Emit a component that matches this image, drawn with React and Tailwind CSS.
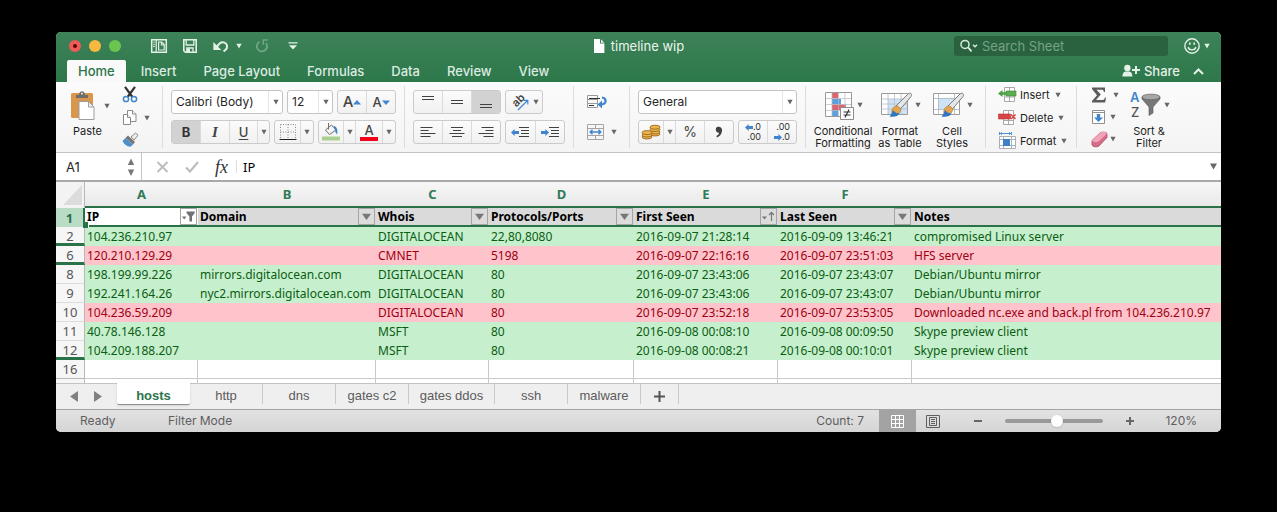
import React from "react";

const COLUMNS = [
  { letter: "A", title: "IP", filter: "filtered" },
  { letter: "B", title: "Domain", filter: "plain" },
  { letter: "C", title: "Whois", filter: "plain" },
  { letter: "D", title: "Protocols/Ports", filter: "plain" },
  { letter: "E", title: "First Seen", filter: "sorted" },
  { letter: "F", title: "Last Seen", filter: "plain" },
  { letter: "", title: "Notes", filter: null },
];

const ROWS = [
  { n: 2, tone: "good", gap: true, cells: ["104.236.210.97", "", "DIGITALOCEAN", "22,80,8080", "2016-09-07 21:28:14", "2016-09-09 13:46:21", "compromised Linux server"] },
  { n: 6, tone: "bad", gap: true, cells: ["120.210.129.29", "", "CMNET", "5198", "2016-09-07 22:16:16", "2016-09-07 23:51:03", "HFS server"] },
  { n: 8, tone: "good", cells: ["198.199.99.226", "mirrors.digitalocean.com", "DIGITALOCEAN", "80", "2016-09-07 23:43:06", "2016-09-07 23:43:07", "Debian/Ubuntu mirror"] },
  { n: 9, tone: "good", cells: ["192.241.164.26", "nyc2.mirrors.digitalocean.com", "DIGITALOCEAN", "80", "2016-09-07 23:43:06", "2016-09-07 23:43:07", "Debian/Ubuntu mirror"] },
  { n: 10, tone: "bad", cells: ["104.236.59.209", "", "DIGITALOCEAN", "80", "2016-09-07 23:52:18", "2016-09-07 23:53:05", "Downloaded nc.exe and back.pl from 104.236.210.97"] },
  { n: 11, tone: "good", cells: ["40.78.146.128", "", "MSFT", "80", "2016-09-08 00:08:10", "2016-09-08 00:09:50", "Skype preview client"] },
  { n: 12, tone: "good", gap: true, cells: ["104.209.188.207", "", "MSFT", "80", "2016-09-08 00:08:21", "2016-09-08 00:10:01", "Skype preview client"] },
];

const Caret = ({ className = "text-[#666]" }) => (
  <svg className={`shrink-0 ${className}`} width="6" height="6" viewBox="0 0 6 6" fill="currentColor" aria-hidden="true">
    <path d="M0.4 0.8h5.2L3 5.4z" />
  </svg>
);

function TitleBar() {
  return (
    <div className="grid h-7 grid-cols-[1fr_auto_1fr] items-center">
      <div className="flex items-center pl-[13px]">
        <div className="flex gap-2">
          <button aria-label="Close" className="flex size-3 items-center justify-center rounded-full bg-[#ee5b58]">
            <span className="size-1 rounded-full bg-[#5a0505]" />
          </button>
          <button aria-label="Minimize" className="size-3 rounded-full bg-[#f6b840]" />
          <button aria-label="Zoom window" className="size-3 rounded-full bg-[#6cc551]" />
        </div>
        <div className="ml-[29px] flex items-center text-[#e3f1e7]">
          <button aria-label="Templates">
            <svg width="18" height="16" viewBox="0 0 18 16" fill="none" stroke="currentColor" strokeWidth="1.5">
              <path d="M1.7 1.7h14.6v12.6H1.7z" />
              <path d="M6.2 2v12" strokeWidth="1.2" />
              <path d="M3.2 4h1.6M3.2 6.2h1.6M3.2 8.4h1.6" strokeWidth="1.1" />
              <path d="M8.6 4h3.2l2.4 2.6V12H8.6z" strokeWidth="1.2" />
              <path d="M11.4 4v3h3" strokeWidth="1.1" />
            </svg>
          </button>
          <button aria-label="Save" className="ml-[14px]">
            <svg width="16" height="16" viewBox="0 0 16 16" fill="none" stroke="currentColor" strokeWidth="1.6">
              <path d="M1.8 1.8h12.4v12.4H3.4L1.8 12.6z" />
              <path d="M4.2 2v5h7.6V2M4.8 14V10h6.2v4" strokeWidth="1.3" />
              <path d="M5 10.6h3V14H5z" fill="currentColor" stroke="none" />
            </svg>
          </button>
          <button aria-label="Undo" className="ml-[14px]">
            <svg width="18" height="16" viewBox="0 0 18 16" fill="none" stroke="currentColor" strokeWidth="2">
              <path d="M4.5 9.5C7 5 10 3.5 12.6 4.6c3.2 1.4 3 5.4 1 7.2l-2 1.8" />
              <path d="M1.4 4v8h8z" fill="currentColor" stroke="none" />
            </svg>
          </button>
          <button aria-label="Undo history" className="ml-[6px]"><Caret className="text-[#e3f1e7]" /></button>
          <button aria-label="Redo" className="ml-3 text-[#72a785]">
            <svg width="16" height="16" viewBox="0 0 16 16" fill="none" stroke="currentColor" strokeWidth="1.8">
              <path d="M5.6 3.8a5.1 5.1 0 1 0 6.4 1.5" />
              <path d="M8.6 1.2h5v1.6H10v4H8.6z" fill="currentColor" stroke="none" />
            </svg>
          </button>
          <button aria-label="Customize toolbar" className="ml-[18px]">
            <svg width="10" height="8" viewBox="0 0 10 8" fill="currentColor"><path d="M0.5 0.3h9v1.3h-9zM1 3.2h8L5 7.4z" /></svg>
          </button>
        </div>
      </div>
      <h1 className="flex items-center gap-[6px] text-[13px] leading-4 text-[#eaf4ed]">
        <svg width="12" height="14" viewBox="0 0 12 14"><path d="M1 0h6v4.6h4.4V14H1z" fill="#fff" /><path d="M8 0.2 11.3 3.8H8z" fill="#e8f2eb" /></svg>
        timeline wip
      </h1>
      <div className="flex items-center justify-end pr-[11px]">
        <label className="flex h-5 w-[214px] items-center rounded-[3px] bg-[#2a6240] pl-[6px]">
          <svg width="18" height="14" viewBox="0 0 18 14" fill="none" stroke="#dcebe1" strokeWidth="1.5">
            <circle cx="5" cy="5.4" r="4" /><path d="m8 8.4 3.6 4" strokeWidth="1.8" /><path d="m13 5.8 2 2 2-2" strokeWidth="1.3" />
          </svg>
          <input aria-label="Search Sheet" placeholder="Search Sheet" className="ml-1 min-w-0 flex-1 bg-transparent text-[13px] leading-4 text-white outline-none placeholder:text-[#76a386]" />
        </label>
        <button aria-label="Feedback" className="ml-4 flex items-center gap-1 text-[#e3f1e7]">
          <svg width="16" height="16" viewBox="0 0 16 16" fill="none" stroke="currentColor" strokeWidth="1.4">
            <circle cx="8" cy="8" r="7.2" /><path d="M4.2 9.2c.6 3.6 7 3.6 7.6 0" /><path d="M5.8 4.4v2.4M10.2 4.4v2.4" strokeWidth="1.6" />
          </svg>
          <Caret className="text-[#e3f1e7]" />
        </button>
      </div>
    </div>
  );
}

const MENU = ["Insert", "Page Layout", "Formulas", "Data", "Review", "View"];

function MenuTabs() {
  return (
    <nav className="flex h-[22px] items-stretch justify-between pl-[11px] pr-[17px]">
      <div className="flex gap-[3px] text-[13px] leading-4 font-medium">
        <button className="rounded-t-[2px] bg-[#f9f9f9] px-[11px] text-[#2b7549]">Home</button>
        {MENU.map((m) => (
          <button key={m} className="px-3 text-[#dcebe1]">{m}</button>
        ))}
      </div>
      <div className="flex items-center gap-[13px] text-[#e3f1e7]">
        <button className="flex items-center gap-1 text-[13px] leading-4 font-medium">
          <svg width="18" height="14" viewBox="0 0 18 14" fill="currentColor">
            <circle cx="5.4" cy="4" r="3.2" /><path d="M0.4 12.6c0-3.6 1.6-4.8 3-5.2h4c1.4.4 3 1.600 3 5.200z" /><path d="M13 2h2v3h3v2h-3v3h-2V7h-3V5h3z" />
          </svg>
          Share
        </button>
        <button aria-label="Collapse ribbon">
          <svg width="11" height="7" viewBox="0 0 11 7" fill="none" stroke="currentColor" strokeWidth="2"><path d="M1 6l4.500-4.500L10 6" /></svg>
        </button>
      </div>
    </nav>
  );
}

const Group = ({ className = "", children }) => (
  <div className={`shrink-0 border-r border-[#dcdcdc] py-1 ${className}`}>{children}</div>
);

const Segment = ({ className = "", children }) => (
  <div className={`flex h-6 divide-x divide-[#dadada] overflow-hidden rounded-[3px] border border-[#cbcbcb] bg-gradient-to-b from-[#fbfbfb] to-[#f1f1f1] ${className}`}>{children}</div>
);

const Tool = ({ label, className = "flex-1", pressed, children }) => (
  <button aria-label={label} aria-pressed={pressed} className={`flex items-center justify-center ${pressed ? "bg-[#d2d2d2]" : ""} ${className}`}>{children}</button>
);

const DropField = ({ label, value, options, className }) => (
  <div className={`relative flex h-6 items-center rounded-[3px] border border-[#c4c4c4] bg-white ${className}`}>
    <select aria-label={label} defaultValue={value} className="h-full w-full appearance-none bg-transparent pl-1 text-[12px] leading-4 text-[#262626] outline-none">
      {options.map((o) => <option key={o}>{o}</option>)}
    </select>
    <span className="pointer-events-none absolute inset-y-0 right-0 flex w-[14px] items-center justify-center border-l border-[#e6e6e6]"><Caret /></span>
  </div>
);

const Lines = ({ d, width = 16 }) => (
  <svg width={width} height="18" viewBox={`0 0 ${width} 18`} fill="none" stroke="#404040" strokeWidth="1"><path d={d} /></svg>
);

const BlueArrow = ({ flip }) => (
  <svg width="8" height="7" viewBox="0 0 8 7"><path d={flip ? "M8 3.500 4.400 0v2H0v3h4.400v2z" : "M0 3.500 3.600 0v2H8v3H3.600v2z"} fill="#3f86cf" /></svg>
);

function ClipboardGroup() {
  return (
    <Group className="flex w-[107px] pl-[14px]">
      <div className="flex flex-col">
        <div className="flex items-center gap-2">
          <button aria-label="Paste clipboard">
            <svg width="26" height="31" viewBox="0 0 26 31">
              <rect x="1" y="3" width="22" height="25" rx="1.500" fill="#d9974d" />
              <path d="M6 8V5h3c0-5 6-5 6 0h3v3z" fill="#6d6d6d" /><circle cx="12" cy="3.600" r="1.100" fill="#ddd" />
              <path d="M9 11.500h9.500l5.500 5.500v12.500H9z" fill="#fff" stroke="#9d9d9d" />
              <path d="M18.500 11.500v5.500H24z" fill="#f0f0f0" stroke="#9d9d9d" />
            </svg>
          </button>
          <Caret />
        </div>
        <span className="mt-[3px] ml-[3px] text-[11px] leading-[14px] text-[#1c1c1c]">Paste</span>
      </div>
      <div className="-mt-1 ml-3 flex flex-col gap-[6px]">
        <button aria-label="Cut">
          <svg width="16" height="17" viewBox="0 0 16 17" fill="none">
            <path d="M3 0.800 10.400 11M13 0.800 5.600 11" stroke="#333" strokeWidth="2.200" />
            <circle cx="4" cy="13" r="2.600" stroke="#4186c8" strokeWidth="1.500" /><circle cx="12" cy="13" r="2.600" stroke="#4186c8" strokeWidth="1.500" />
          </svg>
        </button>
        <button aria-label="Copy" className="flex items-center gap-[6px]">
          <svg width="16" height="17" viewBox="0 0 16 17" fill="#fff" stroke="#8b8b8b">
            <path d="M5.500 1.500h5l3.500 3.500v7.500H5.500z" /><path d="M10.500 1.500V5H14" /><path d="M1.500 5.500h4l3 3v7h-7z" /><path d="M5.500 5.500v3h3" />
          </svg>
          <Caret />
        </button>
        <button aria-label="Format Painter">
          <svg width="17" height="16" viewBox="0 0 17 16">
            <path d="m9 5 4.500-4 2.500 2.200L12.200 8z" fill="#ededed" stroke="#8a8a8a" />
            <path d="M6 3.400 13 10l-2 2.400L3.400 6z" fill="#777" /><path d="M3.400 6 11 12.400 9 14.600c-4 .4-6.500-2-8.500-5.600z" fill="#4f8fc9" />
          </svg>
        </button>
      </div>
    </Group>
  );
}

function FontGroup() {
  return (
    <Group className="flex w-[242px] flex-col gap-[6px] px-2">
      <div className="flex justify-between">
        <DropField label="Font" value="Calibri (Body)" options={["Calibri (Body)", "Arial"]} className="w-28" />
        <DropField label="Font size" value="12" options={["11", "12", "14"]} className="w-[46px]" />
        <Segment className="w-[59px]">
          <Tool label="Increase font size"><span className="text-[15px] leading-4 font-medium text-[#444]">A</span><svg width="8" height="5" viewBox="0 0 8 5"><path d="M0 4.500h8L4 0z" fill="#3f86cf" /></svg></Tool>
          <Tool label="Decrease font size"><span className="text-[13px] leading-4 font-medium text-[#444]">A</span><svg width="8" height="5" viewBox="0 0 8 5"><path d="M0 .500h8L4 5z" fill="#3f86cf" /></svg></Tool>
        </Segment>
      </div>
      <div className="flex justify-between">
        <Segment className="w-[99px]">
          <Tool label="Bold" pressed className="w-[29px]"><b className="text-[13px] leading-4 text-[#333]">B</b></Tool>
          <Tool label="Italic" className="w-[29px]"><i className="font-['Liberation_Serif',serif] text-[15px] leading-4 font-bold text-[#444]">I</i></Tool>
          <Tool label="Underline" className="w-[28px]"><span className="text-[13px] leading-4 font-medium text-[#444] underline underline-offset-2">U</span></Tool>
          <Tool label="Underline options"><Caret /></Tool>
        </Segment>
        <Segment className="w-10">
          <Tool label="Borders" className="w-[26px]">
            <svg width="18" height="18" viewBox="0 0 18 18" fill="none" stroke="#8a8a8a"><path d="M1.500 1.500h15v15M1.500 1.500v15M9 1.500v15M1.500 9h15" strokeDasharray="1 1.500" /><path d="M0.500 16.500h17" stroke="#222" /></svg>
          </Tool>
          <Tool label="Border options"><Caret /></Tool>
        </Segment>
        <Segment className="w-[78px]">
          <Tool label="Fill colour" className="w-[25px]">
            <svg width="20" height="20" viewBox="0 0 20 20"><path d="m4.500 8 6-5 4.500 5-6.500 4.500z" fill="#f5f5f5" stroke="#6f6f6f" /><path d="M7.500 1v6.500" stroke="#6f6f6f" /><path d="M12.500 4c4 .5 4.500 5 3.500 8.500-2-1.500-1.500-4.500-3.500-8.500" fill="#3f86cf" /><rect x="1" y="14.500" width="18" height="4" fill="#a9d08e" /></svg>
          </Tool>
          <Tool label="Fill options" className="w-3"><Caret /></Tool>
          <Tool label="Font colour" className="w-[27px]"><span className="border-b-4 border-[#f3001b] px-1 text-[13px] leading-[14px] font-medium text-[#444]">A</span></Tool>
          <Tool label="Font colour options"><Caret /></Tool>
        </Segment>
      </div>
    </Group>
  );
}

function AlignGroup() {
  return (
    <Group className="flex flex-col gap-[6px] px-2">
      <div className="flex gap-1">
        <Segment className="w-[88px]">
          <Tool label="Top align"><Lines d="M2 3.500h12M2 6.500h12" /></Tool>
          <Tool label="Middle align"><Lines d="M2 7.500h12M2 10.500h12" /></Tool>
          <Tool label="Bottom align" pressed><Lines d="M2 11.500h12M2 14.500h12" /></Tool>
        </Segment>
        <Segment className="w-[38px]">
          <Tool label="Orientation" className="w-full gap-[2px]">
            <svg width="22" height="22" viewBox="0 0 22 22" fill="none"><text x="9" y="13" textAnchor="middle" transform="rotate(-45 9 9)" fontSize="11" fontWeight="600" fill="#444">ab</text><path d="M9 19 18.500 9.500M14.500 9.300h4.300v4.300" stroke="#3f86cf" strokeWidth="1.200" /></svg>
            <Caret />
          </Tool>
        </Segment>
      </div>
      <div className="flex gap-1">
        <Segment className="w-[88px]">
          <Tool label="Align left"><Lines d="M0.500 4.500h12M0.500 7.500h8M0.500 10.500h15M0.500 13.500h10" /></Tool>
          <Tool label="Center"><Lines d="M2 4.500h12M4 7.500h8M0.500 10.500h15M3 13.500h10" /></Tool>
          <Tool label="Align right"><Lines d="M3.500 4.500h12M7.500 7.500h8M0.500 10.500h15M5.500 13.500h10" /></Tool>
        </Segment>
        <Segment className="w-[60px]">
          <Tool label="Decrease indent"><BlueArrow /><Lines width={10} d="M0 4.500h10M2 7.500h8M2 10.500h8M0 13.500h10" /></Tool>
          <Tool label="Increase indent"><BlueArrow flip /><Lines width={10} d="M0 4.500h10M2 7.500h8M2 10.500h8M0 13.500h10" /></Tool>
        </Segment>
      </div>
    </Group>
  );
}

function WrapGroup() {
  return (
    <Group className="flex w-[56px] flex-col gap-[6px] pl-3">
      <button aria-label="Wrap text" className="flex h-6 items-center">
        <svg width="21" height="16" viewBox="0 0 21 16" fill="none"><path d="M1.500 1.500h10v12h-10zM1.500 5.500h10M1.500 9.500h10" stroke="#9a9a9a" /><path d="M3 4.500h11M3 11.500h5" stroke="#333" /><path d="M16 3.500c5 1 5 7-1.500 7" stroke="#3f86cf" strokeWidth="2.200" /><path d="M16 6.500v8l-4.500-4z" fill="#3f86cf" /></svg>
      </button>
      <button aria-label="Merge cells" className="flex h-6 items-center gap-[6px]">
        <svg width="19" height="18" viewBox="0 0 19 18" fill="none"><path d="M1.500 1.500h16v15h-16zM1.500 5.500h16M1.500 12.500h16M9.500 1.500v4M9.500 12.500v4" stroke="#a5a5a5" /><path d="M4.500 9h10M6.500 6.800 4.200 9l2.300 2.200M12.500 6.800 14.800 9l-2.300 2.200" stroke="#3f86cf" strokeWidth="1.500" /></svg>
        <Caret />
      </button>
    </Group>
  );
}

function NumberGroup() {
  return (
    <Group className="flex flex-col gap-[6px] px-2">
      <DropField label="Number format" value="General" options={["General", "Number", "Text"]} className="w-[159px]" />
      <div className="flex justify-between">
        <Segment className="w-24">
          <Tool label="Currency" className="w-[25px]">
            <svg width="20" height="16" viewBox="0 0 20 16" fill="#f0b44c" stroke="#8d5f1c" strokeWidth="0.800">
              <ellipse cx="14" cy="10" rx="5" ry="2" /><ellipse cx="14" cy="8" rx="5" ry="2" /><ellipse cx="14" cy="5.600" rx="5" ry="2" /><ellipse cx="14" cy="3.200" rx="5" ry="2" />
              <ellipse cx="6" cy="13" rx="5" ry="2" /><ellipse cx="6" cy="11" rx="5" ry="2" /><ellipse cx="6" cy="8.600" rx="5" ry="2" />
            </svg>
          </Tool>
          <Tool label="Currency options" className="w-3"><Caret /></Tool>
          <Tool label="Percent"><span className="text-[14px] leading-4 text-[#444]">%</span></Tool>
          <Tool label="Comma style"><svg width="8" height="12" viewBox="0 0 8 12"><path d="M2 1c3-1.200 5.500.8 5 4-.4 3.500-2.500 5.500-5 6.500L1.400 10c1.600-.8 2.600-2 2.700-3.200C.600 7-.200 2.200 2 1z" fill="#404040" /></svg></Tool>
        </Segment>
        <Segment className="w-[59px]">
          <Tool label="Increase decimals"><span className="flex flex-col items-end text-[9px] leading-[10px] text-[#333]"><span className="flex items-center"><BlueArrow />.0</span><span>.00</span></span></Tool>
          <Tool label="Decrease decimals"><span className="flex flex-col items-end text-[9px] leading-[10px] text-[#333]"><span>.00</span><span className="flex items-center"><BlueArrow flip />.0</span></span></Tool>
        </Segment>
      </div>
    </Group>
  );
}

const BigTool = ({ icon, lines, className }) => (
  <button className={`flex flex-col items-center ${className}`}>
    <span className="flex items-center gap-[2px]">{icon}<Caret /></span>
    <span className="mt-[5px] text-[11px] leading-3 whitespace-nowrap text-[#1c1c1c]">{lines[0]}<br />{lines[1]}</span>
  </button>
);

const Brush = () => (
  <>
    <path d="m16 16 12-12c2.500-2 4.500 0 3 2.500L20.500 19z" fill="#e6e6e6" stroke="#7c7c7c" />
    <path d="M14 17c4-3 8 1.500 6 5-1.500 2.500-5 3-7 2.500-2-1.500-1.500-5.500 1-7.500z" fill="#e3a64e" stroke="#b67a2a" strokeWidth="0.600" />
    <path d="M13 20c-1 3.500-2 4.500-3.500 6.500 4.500.8 9 0 10-3.500-2.500.6-5-.6-6.500-3z" fill="#2f77c2" />
  </>
);

function StylesGroup() {
  return (
    <Group className="flex w-[180px] pl-2">
      <BigTool className="w-[58px]" lines={["Conditional", "Formatting"]} icon={
        <svg width="31" height="30" viewBox="0 0 31 30"><path d="M1.500 2.500h26v24h-26z" fill="#fff" stroke="#999" /><path d="M8 3h6v5.500H8z" fill="#da6470" /><path d="M8 9h9v5.500H8z" fill="#5ba0df" /><path d="M8 14.500h14V20H8z" fill="#da6470" /><path d="M8 20h6v6H8z" fill="#5ba0df" /><path d="M2 8.500h25M2 14.500h25M2 20.500h25M8 3v23M14.500 3v23M21 3v23" stroke="#b9b9b9" strokeWidth="0.700" /><path d="M16.500 17.500h13v12h-13z" fill="#fff" stroke="#8c8c8c" /><path d="M19.500 22h7M19.500 25h7M25 19.500 21 27.500" stroke="#333" strokeWidth="1.200" /></svg>} />
      <BigTool className="ml-[2px] w-[52px]" lines={["Format", "as Table"]} icon={
        <svg width="33" height="30" viewBox="0 0 33 30"><path d="M1.500 3.500h26v21h-26z" fill="#fff" stroke="#9b9b9b" /><path d="M8 9h19v15H8z" fill="#cfe3f6" /><path d="M2 9h25M2 14h25M2 19h25M8 4v20M14.500 4v20M21 4v20" stroke="#b2bcc6" strokeWidth="0.800" /><Brush /></svg>} />
      <BigTool className="w-[52px]" lines={["Cell", "Styles"]} icon={
        <svg width="33" height="30" viewBox="0 0 33 30"><path d="M1.500 3.500h26v21h-26z" fill="#fff" stroke="#9b9b9b" /><path d="M6.500 8.500h16v11h-16z" fill="#cfe3f6" /><path d="M2 8.500h25M2 19.500h25M6.500 4v20M22.500 4v20" stroke="#a9b4be" strokeWidth="0.800" /><Brush /></svg>} />
    </Group>
  );
}

const CELL_TOOLS = [
  { name: "Insert", art: <><path d="M6.500 1.500h10v14h-10zM6.500 11h10M11.500 1.500v14" fill="#fff" stroke="#a9a9a9" /><path d="M8 5h10v5H8z" fill="#5cae50" stroke="#3c8c35" strokeWidth="0.600" /><path d="M0 7.500 4.500 4v2.300H9v2.400H4.500V11z" fill="#4ba13f" /></> },
  { name: "Delete", art: <><path d="M5.500 1.500h10v14h-10zM5.500 11.500h10M10.500 1.500v14" fill="#fff" stroke="#a9a9a9" /><path d="M0.500 5h12v5h-12z" fill="#d94545" stroke="#b33" strokeWidth="0.600" /><path d="m13 5.500 4.500 4.500M17.500 5.500 13 10" stroke="#d94545" strokeWidth="1.600" /></> },
  { name: "Format", art: <><path d="M1.500 4.500h16v12h-16zM1.500 7.500h16M1.500 13.500h16M5.500 4.500v12M13.500 4.500v12" fill="#fff" stroke="#a9b0b6" /><path d="M5 7h7v7H5z" fill="#3f80c6" /><path d="M1.500 0v3M13.500 0v3M2 1.500h11M4 .300 2.500 1.500 4 2.700M11 .300l1.500 1.200L11 2.700" stroke="#3f86cf" fill="none" strokeWidth="0.900" /></> },
];

function Ribbon() {
  return (
    <div className="flex h-[71px] overflow-hidden border-b border-[#c4c4c4] bg-gradient-to-b from-[#fbfbfb] to-[#f4f4f4] py-1">
      <ClipboardGroup />
      <FontGroup />
      <AlignGroup />
      <WrapGroup />
      <NumberGroup />
      <StylesGroup />
      <div className="flex w-[91px] shrink-0 flex-col gap-[5px] border-r border-[#dcdcdc] pl-3">
        {CELL_TOOLS.map((t) => (
          <button key={t.name} className="flex h-[18px] items-center text-[11px] leading-4 text-[#1c1c1c]">
            <svg width="19" height="18" viewBox="0 0 19 18">{t.art}</svg>
            <span className="mr-[5px] ml-[3px]">{t.name}</span><Caret />
          </button>
        ))}
      </div>
      <div className="flex shrink-0 pl-[14px]">
        <div className="flex flex-col gap-[5px]">
          <button aria-label="AutoSum" className="flex h-[18px] items-center gap-[6px]">
            <svg width="16" height="16" viewBox="0 0 16 16"><path d="M1 .500h13V5h-1c-.5-1.700-1-2.300-2.700-2.300H5.500L9.800 7.600 5 13h6c1.800 0 2.400-.8 3-2.600h1L14.200 15.500H1V14l5-5.700L1 2z" fill="#5c5c5c" /></svg>
            <Caret />
          </button>
          <button aria-label="Fill" className="flex h-[18px] items-center gap-1">
            <svg width="15" height="16" viewBox="0 0 15 16"><path d="M1.500 1.500h12v13h-12z" fill="#fff" stroke="#8f8f8f" /><path d="M1.500 3.500h12" stroke="#8f8f8f" /><path d="M5.800 5h3.400v3.500h2.800L7.500 13 3 8.500h2.800z" fill="#3f86cf" /></svg>
            <Caret />
          </button>
          <button aria-label="Clear" className="flex h-[18px] items-center gap-[2px]">
            <svg width="17" height="17" viewBox="0 0 17 17"><path d="M1 9.500 9 2c2-1.500 6.500-1 7 .5v4L8 15c-2 1.500-6.500 1-7-1z" fill="#d76c89" stroke="#b14a68" strokeWidth="0.800" /><path d="M1 9.500 9 2c2-1.500 6.500-1 7 .5l-8.500 8c-2 1-5.500.7-6.500-1z" fill="#f0a4b8" /></svg>
            <Caret />
          </button>
        </div>
        <div className="ml-1 pt-1">
          <BigTool className="w-[52px]" lines={["Sort &", "Filter"]} icon={
            <svg width="33" height="30" viewBox="0 0 33 30"><text x="1" y="12" fontSize="13" fontWeight="600" fill="#3f86cf">A</text><text x="2" y="27" fontSize="13" fontWeight="500" fill="#555">Z</text><path d="M13 7v2l7 8v8.500l4-2.500v-6l7-8V7z" fill="#777" stroke="#555" strokeWidth="0.600" /><ellipse cx="22" cy="7" rx="9" ry="2.800" fill="#a7a7a7" stroke="#666" strokeWidth="0.800" /></svg>} />
        </div>
      </div>
    </div>
  );
}

function FormulaBar() {
  return (
    <div className="flex h-[29px] items-stretch border-b-2 border-[#a9a9a9] bg-white">
      <div className="flex w-[86px] items-center justify-between border-r border-[#c4c4c4] pr-[6px] pl-[10px]">
        <input aria-label="Name Box" defaultValue="A1" className="w-12 text-[13px] leading-4 text-[#262626] outline-none" />
        <svg width="8" height="18" viewBox="0 0 8 18" fill="#777"><path d="M4 0.500 7.200 7H.8zM4 18 7.200 11.500H.8z" /></svg>
      </div>
      <div className="flex items-center pl-[14px]">
        <button aria-label="Cancel entry"><svg width="13" height="12" viewBox="0 0 13 12" stroke="#bdbdbd" strokeWidth="2"><path d="m1.500 1 10 10M11.500 1l-10 10" /></svg></button>
        <button aria-label="Confirm entry" className="ml-4"><svg width="14" height="12" viewBox="0 0 14 12" fill="none" stroke="#bdbdbd" strokeWidth="2.200"><path d="m1 6.500 4 4L13 1" /></svg></button>
        <button aria-label="Insert function" className="ml-4 font-['Liberation_Serif',serif] text-[18px] leading-5 text-[#333] italic">fx</button>
      </div>
      <input aria-label="Formula" defaultValue="IP" className="my-[7px] ml-2 min-w-0 flex-1 border-l border-[#dedede] pl-[6px] font-['Noto_Sans',sans-serif] text-[13px] leading-4 text-black outline-none" />
      <button aria-label="Expand formula bar" className="px-1"><svg width="7" height="7" viewBox="0 0 7 7" fill="#666"><path d="M0 .500h7L3.500 6.500z" /></svg></button>
    </div>
  );
}

const FilterButton = ({ kind, title }) => (
  <button aria-label={`Filter ${title}`} className={`flex size-[17px] shrink-0 items-center justify-center border border-[#a5a5a5] ${kind === "filtered" ? "bg-white" : "bg-[#dcdcdc]"}`}>
    {kind === "plain" && <svg width="11" height="8" viewBox="0 0 11 8"><path d="M1 .800h9L5.500 7z" fill="#777" /></svg>}
    {kind === "filtered" && <svg width="13" height="11" viewBox="0 0 13 11" fill="#6e7276"><path d="M0 5.500h4.400L2.200 8.500zM4.500.500h8.200v1.500L10 5.500v5H7.400v-5L4.500 2z" /></svg>}
    {kind === "sorted" && <svg width="13" height="11" viewBox="0 0 13 11" fill="#777"><path d="M0 5.500h5L2.500 8.500z" /><path d="M9.500 10V1.500M7 4l2.500-2.700L12 4" fill="none" stroke="#777" strokeWidth="1.200" /></svg>}
  </button>
);

const ROW_HEAD = "border-r border-[#b8b8b8] bg-[#f6f6f6] p-0 text-center font-normal text-[#555]";

function Sheet() {
  return (
    <table className="w-full table-fixed border-separate border-spacing-0 bg-white font-['Noto_Sans',sans-serif] text-[12px] leading-4">
      <colgroup>
        <col className="w-[29px]" /><col className="w-[113px]" /><col className="w-[178px]" /><col className="w-[113px]" />
        <col className="w-[145px]" /><col className="w-[144px]" /><col className="w-[134px]" /><col />
      </colgroup>
      <thead>
        <tr className="h-[26px] bg-gradient-to-b from-[#f7f7f7] to-[#e8e8e8]">
          <td className="border-r border-[#b8b8b8] bg-[#f3f3f3] p-0">
            <svg className="ml-auto mr-[2px]" width="19" height="20" viewBox="0 0 19 20"><path d="M19 0v20H0z" fill="#dcdcdc" /></svg>
          </td>
          {COLUMNS.map((c, i) => (
            <th key={i} scope="col" className="border-b-2 border-[#2a7348] p-0 text-[13px] font-bold text-[#2f7a58]">{c.letter}</th>
          ))}
        </tr>
      </thead>
      <tbody>
        <tr className="h-[19px]">
          <th scope="row" className="border-r-2 border-[#2a7348] bg-[#b9dcc6] p-0 text-[13px] font-bold text-[#2a7348]">1</th>
          {COLUMNS.map((c, i) => (
            <th key={c.title} className={`border-b-2 border-[#2a7348] p-0 text-left font-bold text-black ${i === 0 ? "relative bg-white" : "bg-[#dadada]"}`}>
              <div className="flex h-[17px] items-center justify-between pr-px pl-[2px]">
                <span className="leading-[17px]">{c.title}</span>
                {c.filter && <FilterButton kind={c.filter} title={c.title} />}
              </div>
              {i === 0 && <span className="absolute -bottom-[3px] -left-[2px] size-[6px] border-r border-white bg-[#2a7348]" />}
            </th>
          ))}
        </tr>
        {ROWS.map((r) => (
          <tr key={r.n} className={`h-[19px] ${r.tone === "good" ? "bg-[#c6efce] text-[#0b5d12]" : "bg-[#ffc4cb] text-[#9c0012]"}`}>
            <th scope="row" className={`border-r border-r-[#b8b8b8] bg-[#f6f6f6] p-0 text-center align-top text-[13px] font-normal text-[#555] ${r.gap ? "border-b-3 border-b-[#2a7348]" : "border-b border-b-[#dcdcdc]"}`}>
              <div className="h-4 leading-[18px]">{r.n}</div>
            </th>
            {r.cells.map((v, i) => (
              <td key={i} className="overflow-visible p-0 pl-[2px] leading-[18px] whitespace-nowrap">{v}</td>
            ))}
          </tr>
        ))}
        <tr className="h-[19px]">
          <th scope="row" className={`${ROW_HEAD} border-b text-[13px]`}>16</th>
          {COLUMNS.map((c, i) => <td key={i} className={`border-b border-[#c9c9c9] p-0 ${i < 6 ? "border-r" : ""}`} />)}
        </tr>
        <tr className="h-1" aria-hidden="true">
          <td className={ROW_HEAD} />
          {COLUMNS.map((c, i) => <td key={i} className={`border-[#c9c9c9] p-0 ${i < 6 ? "border-r" : ""}`} />)}
        </tr>
      </tbody>
    </table>
  );
}

const SHEETS = ["http", "dns", "gates c2", "gates ddos", "ssh", "malware"];

function SheetTabs() {
  return (
    <div className="flex h-[27px] border-t border-b border-t-[#c4c4c4] border-b-[#a3a3a3] bg-[#efefef] font-['Liberation_Sans',sans-serif] text-[13px] leading-4 text-[#5c5c5c]">
      <div className="flex w-[61px] items-center gap-4 pl-[14px]">
        <button aria-label="Previous sheet"><svg width="8" height="11" viewBox="0 0 8 11"><path d="M8 0v11L0 5.500z" fill="#808080" /></svg></button>
        <button aria-label="Next sheet"><svg width="8" height="11" viewBox="0 0 8 11"><path d="M0 0v11l8-5.500z" fill="#808080" /></svg></button>
      </div>
      <button className="-mt-px mb-1 w-[73px] rounded-b-[2px] border-b border-[#8f8f8f] bg-white pt-1 font-bold text-[#2b7549] shadow-sm">hosts</button>
      {SHEETS.map((s) => (
        <button key={s} className={`mb-[5px] border-r border-[#c9c9c9] pt-1 ${s === "gates ddos" ? "w-[86px]" : "w-[73px]"}`}>{s}</button>
      ))}
      <button aria-label="Add sheet" className="mb-[5px] flex w-[38px] items-center justify-center border-r border-[#c9c9c9] pt-1">
        <svg width="11" height="11" viewBox="0 0 11 11" stroke="#555" strokeWidth="2"><path d="M5.500 0v11M0 5.500h11" /></svg>
      </button>
    </div>
  );
}

function StatusBar() {
  return (
    <footer className="flex h-[22px] items-center bg-gradient-to-b from-[#e2e2e2] to-[#d5d5d5] pr-6 pl-6 text-[12px] leading-4 text-[#5f5f5f]">
      <span className="w-[88px]">Ready</span>
      <span>Filter Mode</span>
      <span className="ml-auto">Count: 7</span>
      <button aria-label="Normal view" aria-pressed="true" className="ml-[15px] flex h-full w-[37px] items-center justify-center bg-[#a3a3a3]">
        <svg width="13" height="13" viewBox="0 0 13 13" fill="none" stroke="#fff"><path d="M.5.500h12v12H.5zM.5 4.500h12M.5 8.500h12M4.500.500v12M8.500.500v12" /></svg>
      </button>
      <button aria-label="Page layout view" className="ml-[10px]">
        <svg width="14" height="13" viewBox="0 0 14 13" fill="none" stroke="#5f5f5f"><path d="M.5.500h13v12H.5zM3.500 2.500h7v8h-7zM5 4.500h4M5 6.500h4M5 8.500h4" /></svg>
      </button>
      <button aria-label="Zoom out" className="ml-[34px]"><svg width="8" height="10" viewBox="0 0 8 10"><path d="M0 4h8v2H0z" fill="#666" /></svg></button>
      <input type="range" aria-label="Zoom level" min="0" max="100" defaultValue="53" className="ml-[23px] h-1 w-[98px] appearance-none rounded-full bg-[#999] [&::-webkit-slider-thumb]:size-3 [&::-webkit-slider-thumb]:appearance-none [&::-webkit-slider-thumb]:rounded-full [&::-webkit-slider-thumb]:bg-white [&::-webkit-slider-thumb]:shadow" />
      <button aria-label="Zoom in" className="ml-[23px]"><svg width="8" height="10" viewBox="0 0 8 10"><path d="M0 4h8v2H0zM3 1h2v8H3z" fill="#666" /></svg></button>
      <span className="w-[63px] text-right">120%</span>
    </footer>
  );
}

export default function App() {
  return (
    <main className="min-h-screen bg-black px-14 pt-8 font-[Inter,sans-serif]">
      <div className="overflow-hidden rounded-[5px] bg-[#f4f4f4]">
        <header className="bg-gradient-to-b from-[#3d8259] to-[#2d784a]">
          <TitleBar />
          <MenuTabs />
        </header>
        <Ribbon />
        <FormulaBar />
        <Sheet />
        <SheetTabs />
        <StatusBar />
      </div>
    </main>
  );
}
